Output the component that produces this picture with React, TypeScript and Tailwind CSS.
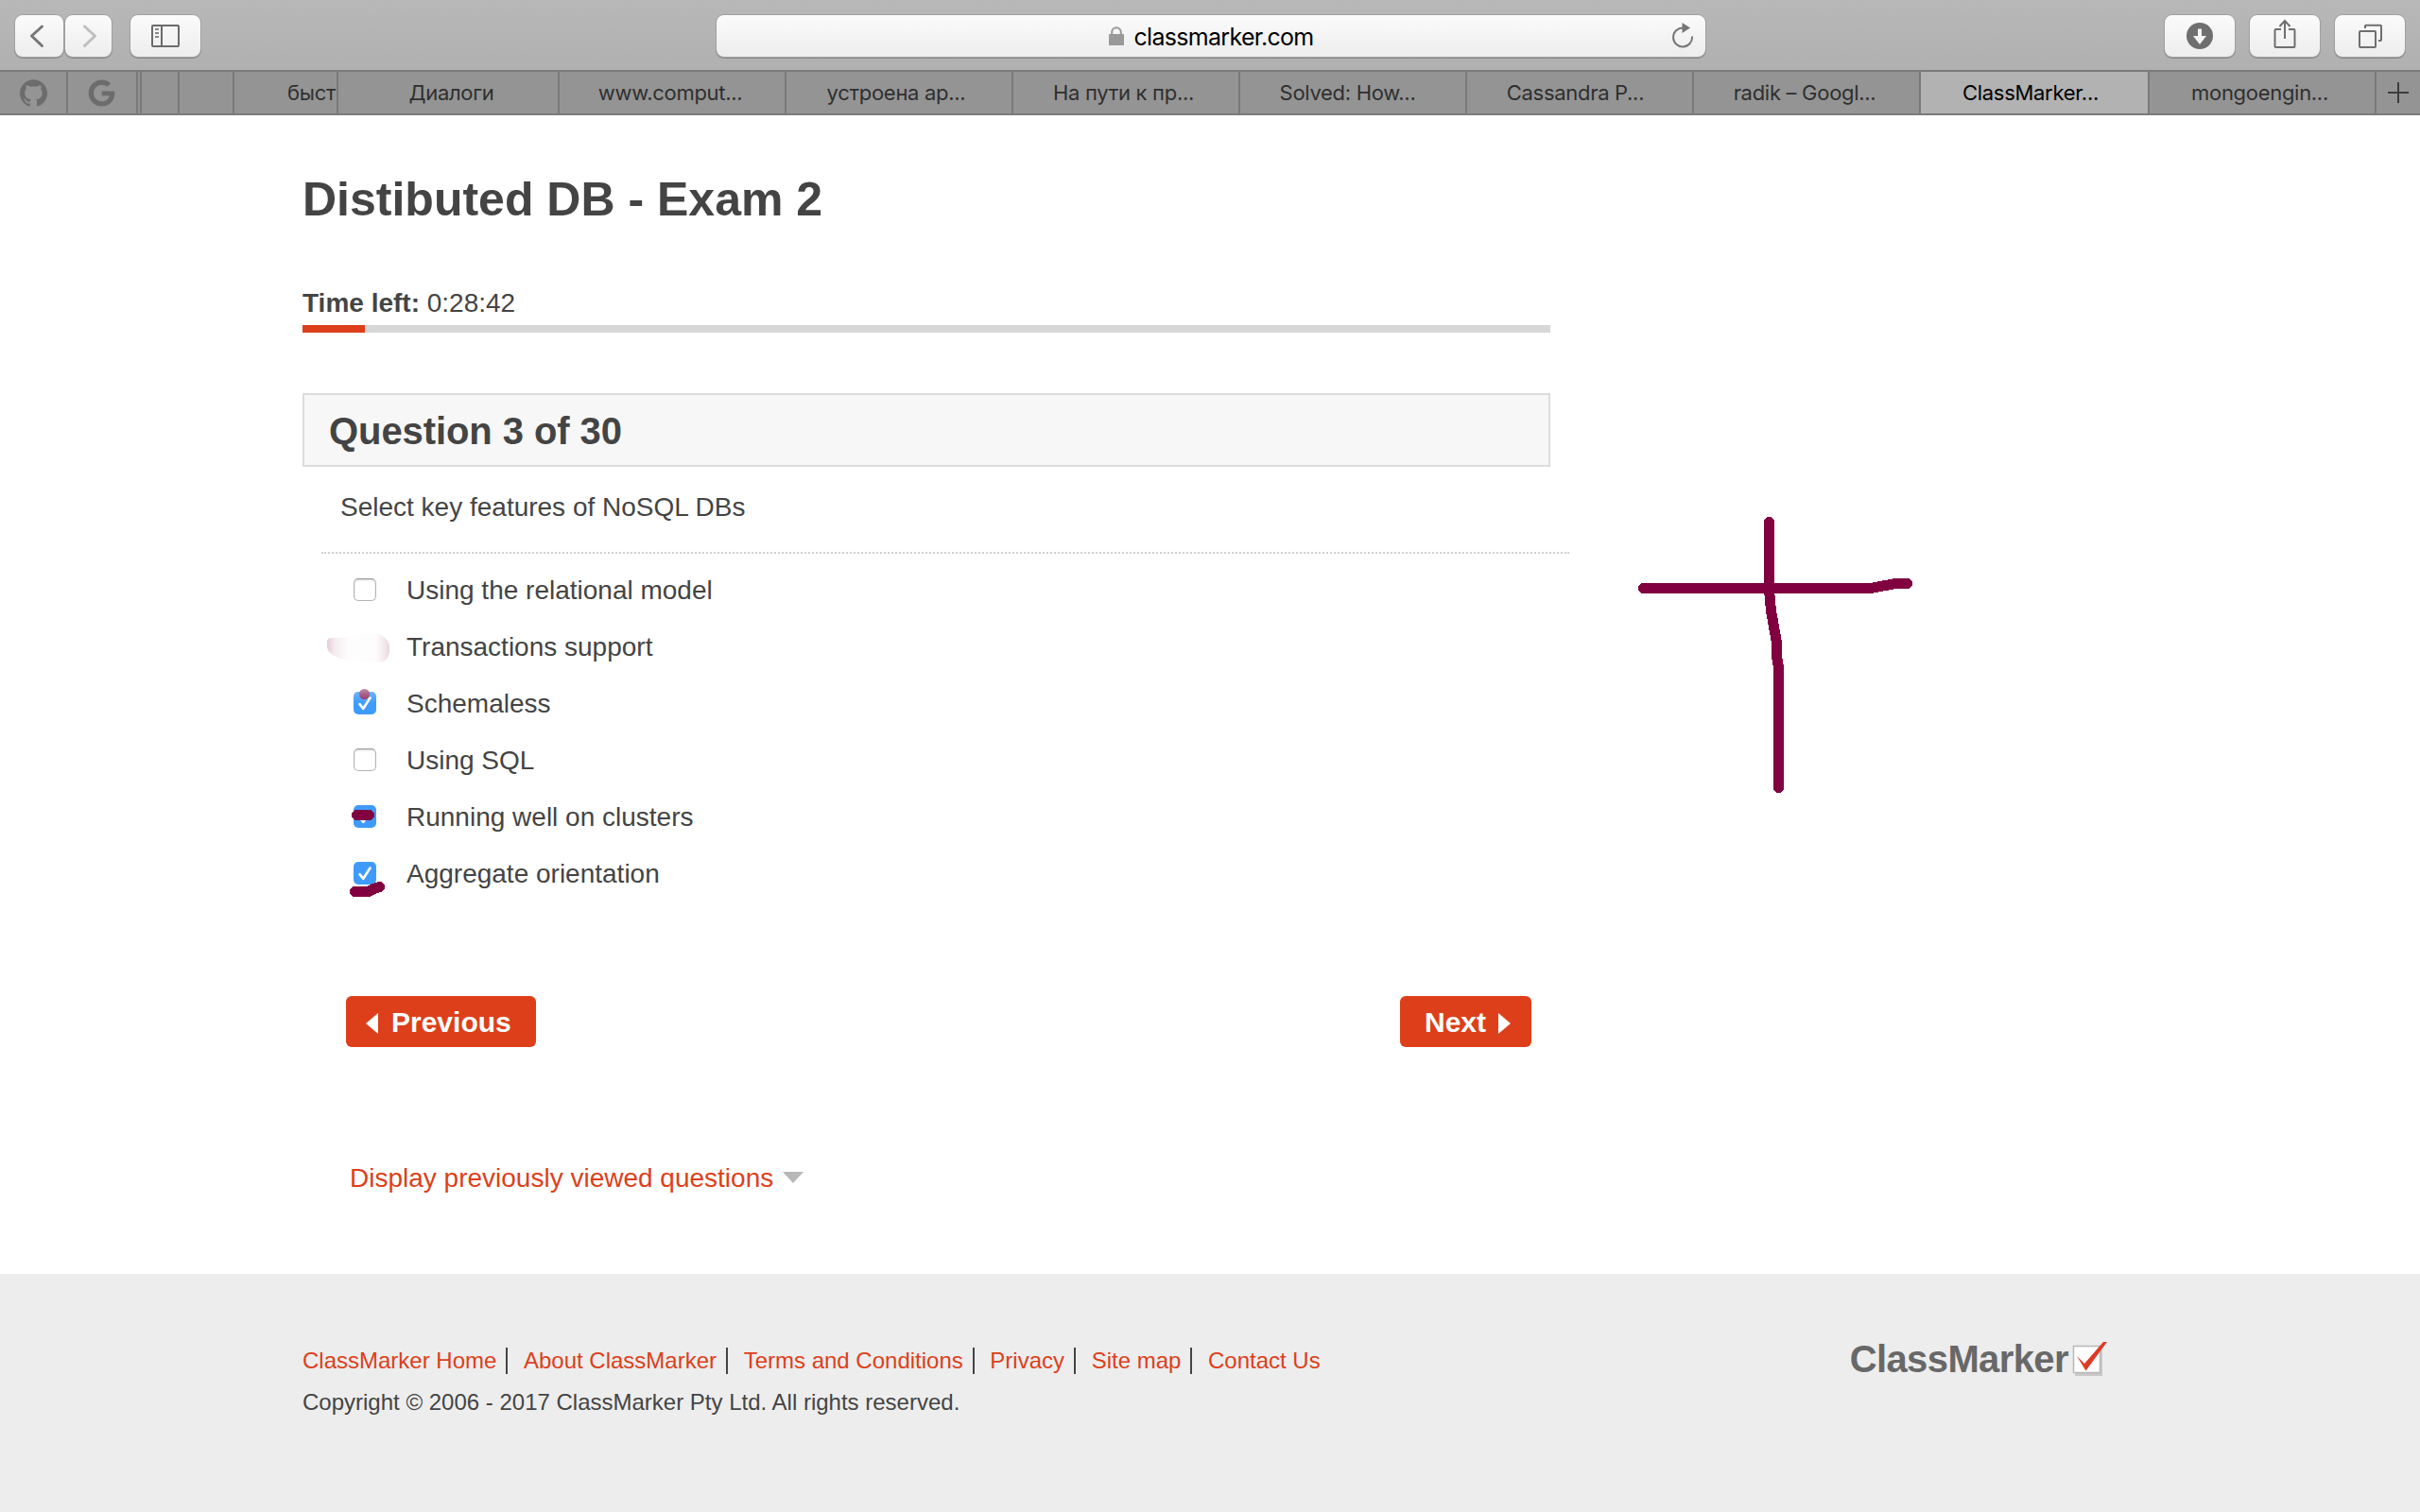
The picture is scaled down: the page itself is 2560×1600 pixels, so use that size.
import type { ReactNode } from "react";
import { FaGoogle } from "react-icons/fa";
import { SiGithub } from "react-icons/si";

const INK = "#800040";

function ToolButton({ className, children }: { className: string; children: ReactNode }) {
  return (
    <div
      className={`flex h-11 items-center justify-center rounded-[8px] bg-linear-to-b from-[#fbfbfb] to-[#ededed] shadow-[0_0_0_1px_#a0a0a0,0_1px_0_1px_#8a8a8a] ${className}`}
    >
      {children}
    </div>
  );
}

function Toolbar() {
  return (
    <div className="flex h-[74px] items-start bg-linear-to-b from-[#b8b8b8] to-[#b0b0b0] pt-4 pl-4">
      <ToolButton className="w-[51px]">
        <svg width="51" height="44" fill="none" stroke="#767676" strokeWidth="3" strokeLinecap="round" strokeLinejoin="round">
          <path d="M28.5 12 17.5 22 28.5 32.500" />
        </svg>
      </ToolButton>
      <ToolButton className="ml-[2px] w-[49px]">
        <svg width="49" height="44" fill="none" stroke="#bfbfbf" strokeWidth="3" strokeLinecap="round" strokeLinejoin="round">
          <path d="M20.500 12 31.500 22 20.500 32.500" />
        </svg>
      </ToolButton>
      <ToolButton className="ml-5 w-[74px]">
        <svg width="30" height="24" fill="none" stroke="#6b6b6b" strokeWidth="2">
          <rect x="1" y="1" width="28" height="22" rx="1" />
          <path d="M11 1v22" />
          <path d="M4 5h4M4 9h4M4 13h4" stroke="#8a8a8a" />
        </svg>
      </ToolButton>

      <ToolButton className="relative ml-[546px] w-[1046px]">
        <svg width="16" height="20" className="mr-[11px]">
          <path d="M3.200 9V6a4.800 4.800 0 0 1 9.600 0v3" fill="none" stroke="#999" strokeWidth="2" />
          <rect y="8" width="16" height="12" rx="0.500" fill="#999" />
        </svg>
        <span className="pt-[2px] font-['Inter'] text-[25px] leading-[42px] tracking-[-0.700px] text-black">classmarker.com</span>
        <svg width="24" height="28" className="absolute top-2 right-3">
          <path d="M12.500 5.500A10 10 0 1 0 22 14.500" fill="none" stroke="#767676" strokeWidth="2" />
          <path d="M11.500 0 20 5.500 11.500 11z" fill="#767676" />
        </svg>
      </ToolButton>

      <ToolButton className="ml-[486px] w-[74px]">
        <svg width="28" height="28">
          <circle cx="14" cy="14" r="14" fill="#6f6f6f" />
          <path d="M12 6.500h4V14h5l-7 9-7-9h5z" fill="#f4f4f4" />
        </svg>
      </ToolButton>
      <ToolButton className="ml-4 w-[74px]">
        <svg width="24" height="32" fill="none" stroke="#6f6f6f" strokeWidth="2" className="-mt-1">
          <path d="M8 11H2.500a1 1 0 0 0-1 1v17a1 1 0 0 0 1 1h19a1 1 0 0 0 1-1V12a1 1 0 0 0-1-1H16" />
          <path d="M12 21V2M6.500 8 12 2l5.500 6" />
        </svg>
      </ToolButton>
      <ToolButton className="ml-4 w-[74px]">
        <svg width="26" height="26" fill="none" stroke="#6f6f6f" strokeWidth="2">
          <rect x="2" y="8" width="17" height="17" rx="1" />
          <path d="M8 5V2.500a.800.800 0 0 1 .800-.800H24a1 1 0 0 1 1 1V17a1 1 0 0 1-1 1h-2" />
        </svg>
      </ToolButton>
    </div>
  );
}

const TABS = [
  { title: "Диалоги", width: "w-[234px]", nudge: "pl-[7px]" },
  { title: "www.comput...", width: "w-[240px]", nudge: "pr-1" },
  { title: "устроена ар...", width: "w-[240px]", nudge: "pr-[6px]" },
  { title: "На пути к пр...", width: "w-[240px]", nudge: "pr-[5px]" },
  { title: "Solved: How...", width: "w-[240px]", nudge: "pr-[11px]" },
  { title: "Cassandra P...", width: "w-[240px]", nudge: "pr-[9px]" },
  { title: "radik – Googl...", width: "w-[240px]", nudge: "pr-1" },
  { title: "ClassMarker...", width: "w-[242px]", nudge: "pr-2", active: true },
  { title: "mongoengin...", width: "w-[240px]", nudge: "pr-[5px]" },
];

function TabBar() {
  const cell = "flex h-full shrink-0 items-center justify-center border-r-2 border-[#797979]";
  return (
    <div className="flex h-12 border-y-2 border-[#7a7a7a] bg-[#949494] font-['Inter'] text-[22px] leading-[44px] text-[#2f2f2f]">
      <div className={`${cell} w-[72px] pl-px`}>
        <SiGithub size={29} color="#6c6c6c" />
      </div>
      <div className={`${cell} w-[74px] pr-px`}>
        <FaGoogle size={29} color="#6c6c6c" />
      </div>
      <div className={`${cell} w-1`} />
      <div className={`${cell} w-10`} />
      <div className={`${cell} w-[58px]`} />
      <div className={`${cell} w-[110px] pl-[55px] tracking-[-0.300px]`}>быст</div>
      {TABS.map((t) => (
        <div key={t.title} className={`${cell} ${t.width} ${t.nudge} ${t.active ? "bg-[#b2b2b2] text-black" : ""}`}>
          <span className="tracking-[-0.300px] whitespace-nowrap">{t.title}</span>
        </div>
      ))}
      <div className="flex flex-1 items-center justify-center">
        <svg width="22" height="22" stroke="#3c3c3c" strokeWidth="2">
          <path d="M11 0v22M0 11h22" />
        </svg>
      </div>
    </div>
  );
}

const OPTIONS = [
  { label: "Using the relational model", box: "empty" },
  { label: "Transactions support", box: "hidden" },
  { label: "Schemaless", box: "checked" },
  { label: "Using SQL", box: "empty" },
  { label: "Running well on clusters", box: "checked" },
  { label: "Aggregate orientation", box: "checked" },
];

function Checkbox({ state }: { state: string }) {
  if (state === "hidden") return <div className="size-6" />;
  if (state === "empty")
    return <div className="size-6 rounded-[5px] border border-[#b4b4b4] border-t-[#999] bg-white shadow-[inset_0_1px_2px_#00000030]" />;
  return (
    <div className="size-6 rounded-[5px] bg-[#3f9bfb]">
      <svg width="24" height="24" fill="none" stroke="white" strokeWidth="2.600" strokeLinecap="round" strokeLinejoin="round">
        <path d="M6.500 13.200 10.300 17.800 17.500 6.500" />
      </svg>
    </div>
  );
}

/* Pen strokes drawn over the answer column, which starts at the first option. */
function AnswerInk() {
  return (
    <svg width="100" height="380" className="absolute top-0 left-0">
      <defs>
        <linearGradient id="smear" x1="0" x2="1">
          <stop offset="0" stopColor="#e6ccd8" />
          <stop offset="0.120" stopColor="#f5ebf0" />
          <stop offset="0.350" stopColor="#fefdfd" />
          <stop offset="0.780" stopColor="#fefcfd" />
          <stop offset="0.930" stopColor="#f3e6ec" />
          <stop offset="1" stopColor="#e8d3dd" />
        </linearGradient>
        <linearGradient id="dot" x1="0" x2="0" y1="0" y2="1">
          <stop offset="0" stopColor="#b98aa5" />
          <stop offset="1" stopColor="#a03a6d" />
        </linearGradient>
        <linearGradient id="fade" x1="0" x2="0" y1="0" y2="1">
          <stop offset="0" stopColor="#fff" stopOpacity="0.250" />
          <stop offset="1" stopColor="#fff" stopOpacity="0" />
        </linearGradient>
      </defs>
      <path
        d="M6 84q1-3 5-3h17q8-5 20-5h9q12 2 15 13v7q-2 9-7 10.500h-16l-17-2.500q-13 0-20-5-6-4-6-9z"
        fill="url(#smear)"
      />
      <rect x="34" y="138" width="24" height="12" rx="5" fill="url(#fade)" />
      <circle cx="45.500" cy="140.500" r="5.500" fill="url(#dot)" />
      <g fill="none" stroke={INK} strokeWidth="11" strokeLinecap="round" strokeLinejoin="round" shapeRendering="crispEdges">
        <path d="M37.500 268.500H50.500" />
        <path d="M35.500 349.500H50L55.500 346.500 61.500 344.500H61.600" />
      </g>
    </svg>
  );
}

function CrossInk() {
  return (
    <svg
      width="300"
      height="300"
      className="absolute top-[418px] left-[1730px]"
      fill="none"
      stroke={INK}
      strokeWidth="11"
      strokeLinecap="round"
      strokeLinejoin="round"
      shapeRendering="crispEdges"
    >
      <path d="M141.500 12.500V84.500L143.500 106.500 149.500 140V155L151.500 166V293.500" />
      <path d="M8.500 82.500H249L275 77.500H287.500" />
    </svg>
  );
}

const LINKS = ["ClassMarker Home", "About ClassMarker", "Terms and Conditions", "Privacy", "Site map", "Contact Us"];

function Footer() {
  return (
    <footer className="flex h-[252px] justify-between bg-[#ededed] pt-[78px] pl-80 text-2xl">
      <div>
        <nav className="flex h-7 text-[#dd3f1a]">
          {LINKS.map((l, i) => (
            <a
              key={l}
              className={`leading-7 whitespace-nowrap ${i < LINKS.length - 1 ? "mr-[16.600px] border-r-2 border-[#444] pr-[10px]" : ""}`}
            >
              {l}
            </a>
          ))}
        </nav>
        <p className="mt-[14px] leading-8">Copyright © 2006 - 2017 ClassMarker Pty Ltd. All rights reserved.</p>
      </div>
      <div className="mr-[329px] -mt-[6px] flex h-14 items-start">
        <span className="-mt-2 text-[40px] leading-[52px] font-bold tracking-[-0.600px] text-[#686868]">ClassMarker</span>
        <svg width="40" height="40" className="mt-[-2px] ml-[3px]">
          <rect x="4" y="9" width="29" height="29" fill="#c9c9c9" />
          <rect x="2.500" y="6.500" width="28" height="28" fill="#fdfdfd" stroke="#b9b9b9" strokeWidth="1.500" />
          <path d="M6 17l8 8L34 2h4L15.500 32.500z" fill="#dc3a25" />
        </svg>
      </div>
    </footer>
  );
}

export default function App() {
  return (
    <div className="h-[1600px] w-[2560px] overflow-hidden bg-white font-['Liberation_Sans',sans-serif] text-[28px] text-[#444]">
      <Toolbar />
      <TabBar />
      <div className="relative">
        <main className="ml-80 w-[1340px] pt-[59px]">
          <h1 className="text-[50px] leading-[60px] font-bold">Distibuted DB - Exam 2</h1>
          <p className="mt-16 leading-8">
            <b>Time left:</b> 0:28:42
          </p>
          <div className="mt-[7px] h-2 w-[1320px] bg-[#d7d7d7]">
            <div className="h-full w-[66px] bg-[#dd3f1a]" />
          </div>
          <h2 className="mt-16 h-[78px] w-[1320px] border-2 border-[#dcdcdc] bg-[#f7f7f7] pt-px pl-[26px] text-[40px] leading-[74px] font-bold tracking-[-0.080px]">
            Question 3 of 30
          </h2>
          <p className="mt-[23px] pl-10 leading-10">Select key features of NoSQL DBs</p>
          <div className="mt-[27px] ml-5 border-t-2 border-dotted border-[#d0d0d0]" />
          <div className="relative mt-2 ml-5">
            {OPTIONS.map((o) => (
              <label key={o.label} className="flex h-[60px] items-center gap-8 pl-[34px]">
                <Checkbox state={o.box} />
                <span className="pt-[2px]">{o.label}</span>
              </label>
            ))}
            <AnswerInk />
          </div>
          <div className="mt-[100px] flex justify-between pr-10 pl-[46px] text-[30px] font-bold text-white">
            <button className="flex h-[54px] w-[201px] items-center rounded-md bg-[#dd3f1a] pl-[21px]">
              <svg width="13" height="22" className="mt-1 mr-[14px]" fill="white">
                <path d="M13 0v22L0 11z" />
              </svg>
              Previous
            </button>
            <button className="flex h-[54px] w-[139px] items-center rounded-md bg-[#dd3f1a] pl-[26px]">
              Next
              <svg width="13" height="22" className="mt-1 ml-[13px]" fill="white">
                <path d="M0 0v22l13-11z" />
              </svg>
            </button>
          </div>
          <div className="mt-[118px] flex h-10 items-center pl-[50px] leading-10 text-[#dd3f1a]">
            <span className="pt-[2px]">Display previously viewed questions</span>
            <svg width="22" height="12" className="ml-[10px]" fill="#b7b7b7">
              <path d="M0 0h22L11 12z" />
            </svg>
          </div>
        </main>
        <CrossInk />
      </div>
      <div className="h-[82px]" />
      <Footer />
    </div>
  );
}
